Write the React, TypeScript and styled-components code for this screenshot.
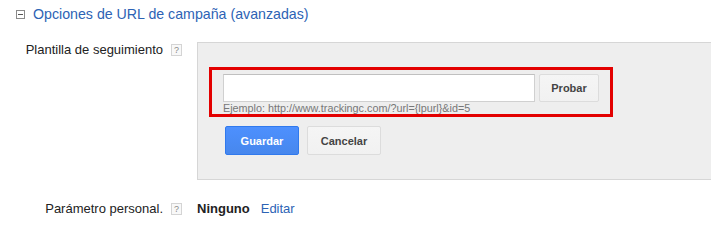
import React from 'react'
import styled, { createGlobalStyle } from 'styled-components'

const GlobalStyle = createGlobalStyle`
  html, body {
    margin: 0;
    padding: 0;
    background: #fff;
    overflow: hidden;
  }
  body {
    font-family: Arial, "Liberation Sans", sans-serif;
    color: #222;
  }
`

const Page = styled.div`
  width: 711px;
  height: 248px;
  overflow: hidden;
`

const Header = styled.div`
  display: flex;
  align-items: center;
  gap: 8px;
  padding: 5px 0 0 16px;
  height: 18px;
`

const Toggle = styled.span`
  box-sizing: border-box;
  width: 9px;
  height: 9px;
  border: 1px solid #8a8a8a;
  background: #fff;
  display: flex;
  align-items: center;
  justify-content: center;

  &::after {
    content: '';
    width: 5px;
    height: 1px;
    background: #555;
  }
`

const Title = styled.span`
  font-size: 14.2px;
  line-height: 18px;
  color: #2d63b5;
`

const Row = styled.div<{ $top: number }>`
  display: grid;
  grid-template-columns: 182px 1fr;
  column-gap: 15px;
  margin-top: ${(p) => p.$top}px;
`

const Label = styled.div`
  display: flex;
  justify-content: flex-end;
  align-items: flex-start;
  gap: 8px;
  font-size: 13px;
  line-height: 15px;
  color: #222;
  white-space: nowrap;
`

const Help = styled.span`
  box-sizing: border-box;
  width: 11px;
  height: 12px;
  margin-top: 2px;
  border: 1px solid #d4d4d4;
  background: #f8f8f8;
  color: #888;
  font-size: 9px;
  line-height: 10px;
  text-align: center;
`

const Panel = styled.div`
  box-sizing: border-box;
  width: 540px;
  background: #eeeeee;
  border: 1px solid #d6d6d6;
  padding: 24px 0 24px 11px;
`

const Highlight = styled.div`
  box-sizing: border-box;
  width: 404px;
  border: 3px solid #e30000;
  padding: 4px 0 0 11px;
`

const InputLine = styled.div`
  display: flex;
  gap: 4px;
`

const UrlInput = styled.input`
  box-sizing: border-box;
  width: 312px;
  height: 28px;
  margin: 0;
  border: 1px solid #d0d0d0;
  border-top-color: #c0c0c0;
  background: #fff;
  padding: 0 6px;
  font: 13px Arial, "Liberation Sans", sans-serif;
  outline: none;
`

const Button = styled.button<{ $primary?: boolean }>`
  box-sizing: border-box;
  height: ${(p) => (p.$primary !== undefined ? 29 : 28)}px;
  min-width: ${(p) => (p.$primary !== undefined ? 74 : 60)}px;
  margin: 0;
  padding: 0 8px;
  border-radius: 2px;
  border: 1px solid ${(p) => (p.$primary ? '#3079ed' : '#dcdcdc')};
  background: ${(p) =>
    p.$primary
      ? 'linear-gradient(#4d90fe, #4787ed)'
      : 'linear-gradient(#f5f5f5, #f1f1f1)'};
  color: ${(p) => (p.$primary ? '#fff' : '#444')};
  font: bold 11px Arial, "Liberation Sans", sans-serif;
  cursor: pointer;
`

const Hint = styled.div`
  font-size: 10.8px;
  line-height: 12px;
  color: #777;
  white-space: nowrap;
`

const Actions = styled.div`
  display: flex;
  gap: 8px;
  margin: 9px 0 0 16px;
`

const Value = styled.div`
  display: flex;
  gap: 11px;
  font-size: 13px;
  line-height: 15px;
`

const Strong = styled.span`
  font-weight: bold;
  color: #222;
`

const Link = styled.a`
  color: #2d63b5;
  text-decoration: none;
  cursor: pointer;
`

export default function App() {
  return (
    <Page>
      <GlobalStyle />
      <Header>
        <Toggle />
        <Title>Opciones de URL de campaña (avanzadas)</Title>
      </Header>

      <Row $top={19}>
        <Label>
          Plantilla de seguimiento
          <Help>?</Help>
        </Label>
        <Panel>
          <Highlight>
            <InputLine>
              <UrlInput type="text" />
              <Button>Probar</Button>
            </InputLine>
            <Hint>Ejemplo: http://www.trackingc.com/?url={'{lpurl}'}&amp;id=5</Hint>
          </Highlight>
          <Actions>
            <Button $primary>Guardar</Button>
            <Button $primary={false}>Cancelar</Button>
          </Actions>
        </Panel>
      </Row>

      <Row $top={21}>
        <Label>
          Parámetro personal.
          <Help>?</Help>
        </Label>
        <Value>
          <Strong>Ninguno</Strong>
          <Link>Editar</Link>
        </Value>
      </Row>
    </Page>
  )
}
